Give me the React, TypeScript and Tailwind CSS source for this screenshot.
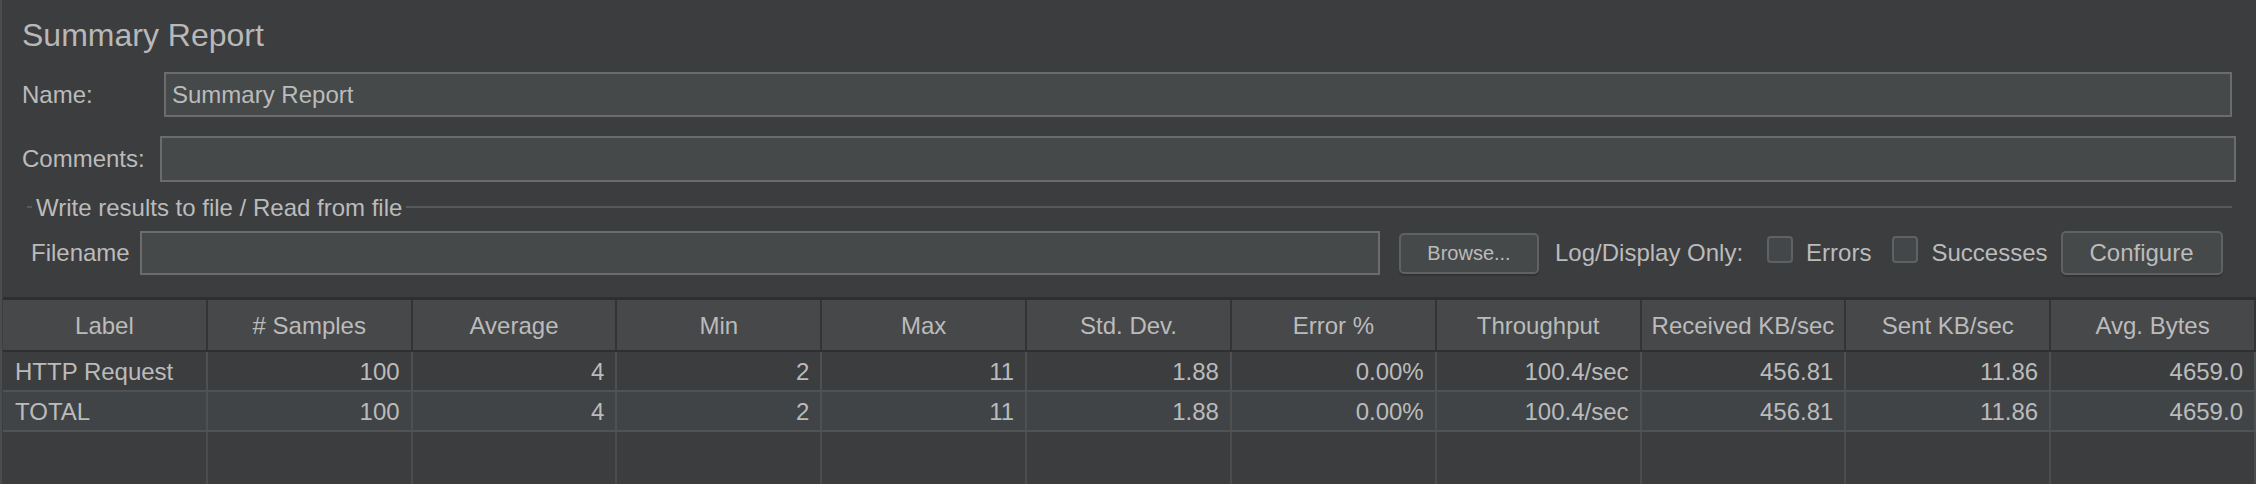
import React from "react";

const COLUMNS = [
  "Label",
  "# Samples",
  "Average",
  "Min",
  "Max",
  "Std. Dev.",
  "Error %",
  "Throughput",
  "Received KB/sec",
  "Sent KB/sec",
  "Avg. Bytes",
];

const ROWS: string[][] = [
  ["HTTP Request", "100", "4", "2", "11", "1.88", "0.00%", "100.4/sec", "456.81", "11.86", "4659.0"],
  ["TOTAL", "100", "4", "2", "11", "1.88", "0.00%", "100.4/sec", "456.81", "11.86", "4659.0"],
];

function Checkbox({ className }: { className: string }) {
  return <div className={`w-[26px] h-[27px] shrink-0 rounded-[4px] border-2 border-[#5f6263] bg-[#43474a] self-start mt-[5px] ${className}`} />;
}

export default function App() {
  return (
    <div className="w-[2256px] h-[484px] bg-[#3c3d3f] border-l-2 border-[#4b4c4e] overflow-hidden flex flex-col font-['Liberation_Sans',Arial,sans-serif] text-[24px] text-[#bbbbbb]">
      <div className="ml-[20px] pt-[17px] text-[32px] leading-[36px] text-[#b8b8b8]">Summary Report</div>

      {/* name */}
      <div className="mt-[19px] h-[45px] flex items-center pl-[20px] pr-[24px]">
        <span className="w-[142px] shrink-0">Name:</span>
        <div className="flex-1 h-full border-2 border-[#6a6c6d] bg-[#45494a] pl-[6px] flex items-center">Summary Report</div>
      </div>

      {/* comments */}
      <div className="mt-[19px] h-[46px] flex items-center pl-[20px] pr-[20px]">
        <span className="w-[138px] shrink-0">Comments:</span>
        <div className="flex-1 h-full border-2 border-[#6a6c6d] bg-[#45494a]" />
      </div>

      {/* titled border */}
      <div className="mt-[14px] h-[24px] flex items-start">
        <div className="ml-[25px] mt-[10px] w-[5px] h-[2px] bg-[#56585a]" />
        <span className="ml-[4px] leading-[24px]">Write results to file / Read from file</span>
        <div className="flex-1 ml-[4px] mr-[24px] mt-[10px] h-[2px] bg-[#56585a]" />
      </div>

      {/* filename row */}
      <div className="mt-[11px] h-[44px] flex items-center">
        <span className="ml-[29px] w-[109px] shrink-0">Filename</span>
        <div className="w-[1240px] h-full shrink-0 border-2 border-[#6a6c6d] bg-[#45494a]" />
        <button className="ml-[19px] w-[140px] h-[41px] shrink-0 rounded-[5px] border-2 border-[#5f6263] bg-[#46494a] shadow-[0_2px_0_#323334] text-[20px] text-[#bbbbbb]">
          Browse...
        </button>
        <span className="ml-[16px] whitespace-nowrap">Log/Display Only:</span>
        <Checkbox className="ml-[24px]" />
        <span className="ml-[13px]">Errors</span>
        <Checkbox className="ml-[21px]" />
        <span className="ml-[13px]">Successes</span>
        <button className="ml-[13px] w-[162px] h-[44px] shrink-0 rounded-[5px] border-2 border-[#5f6263] bg-[#46494a] shadow-[0_2px_0_#323334] text-[24px] text-[#bbbbbb]">
          Configure
        </button>
      </div>

      {/* table */}
      <div className="mt-[22px] ml-[1px] flex-1 flex flex-col border-t-[3px] border-[#2e2f31]">
        <div className="grid grid-cols-11 h-[52px] bg-[#47484a] border-b-2 border-[#2e2f31]">
          {COLUMNS.map((c) => (
            <div key={c} className="flex items-center justify-center pt-[2px] border-r-2 border-[#333436] whitespace-nowrap">
              {c}
            </div>
          ))}
        </div>
        {ROWS.map((row, ri) => (
          <div
            key={ri}
            className={`grid grid-cols-11 h-[40px] border-b-2 border-[#505254] ${ri === 1 ? "bg-[#404446]" : "bg-[#3c3d3f]"}`}
          >
            {row.map((v, ci) => (
              <div
                key={ci}
                className={`flex items-center pt-[1px] border-r-2 border-[#4e5052] whitespace-nowrap ${ci === 0 ? "pl-[12px]" : "justify-end pr-[11px]"}`}
              >
                {v}
              </div>
            ))}
          </div>
        ))}
        <div className="flex-1 grid grid-cols-11">
          {COLUMNS.map((c) => (
            <div key={c} className="border-r-2 border-[#4a4c4e]" />
          ))}
        </div>
      </div>
    </div>
  );
}
